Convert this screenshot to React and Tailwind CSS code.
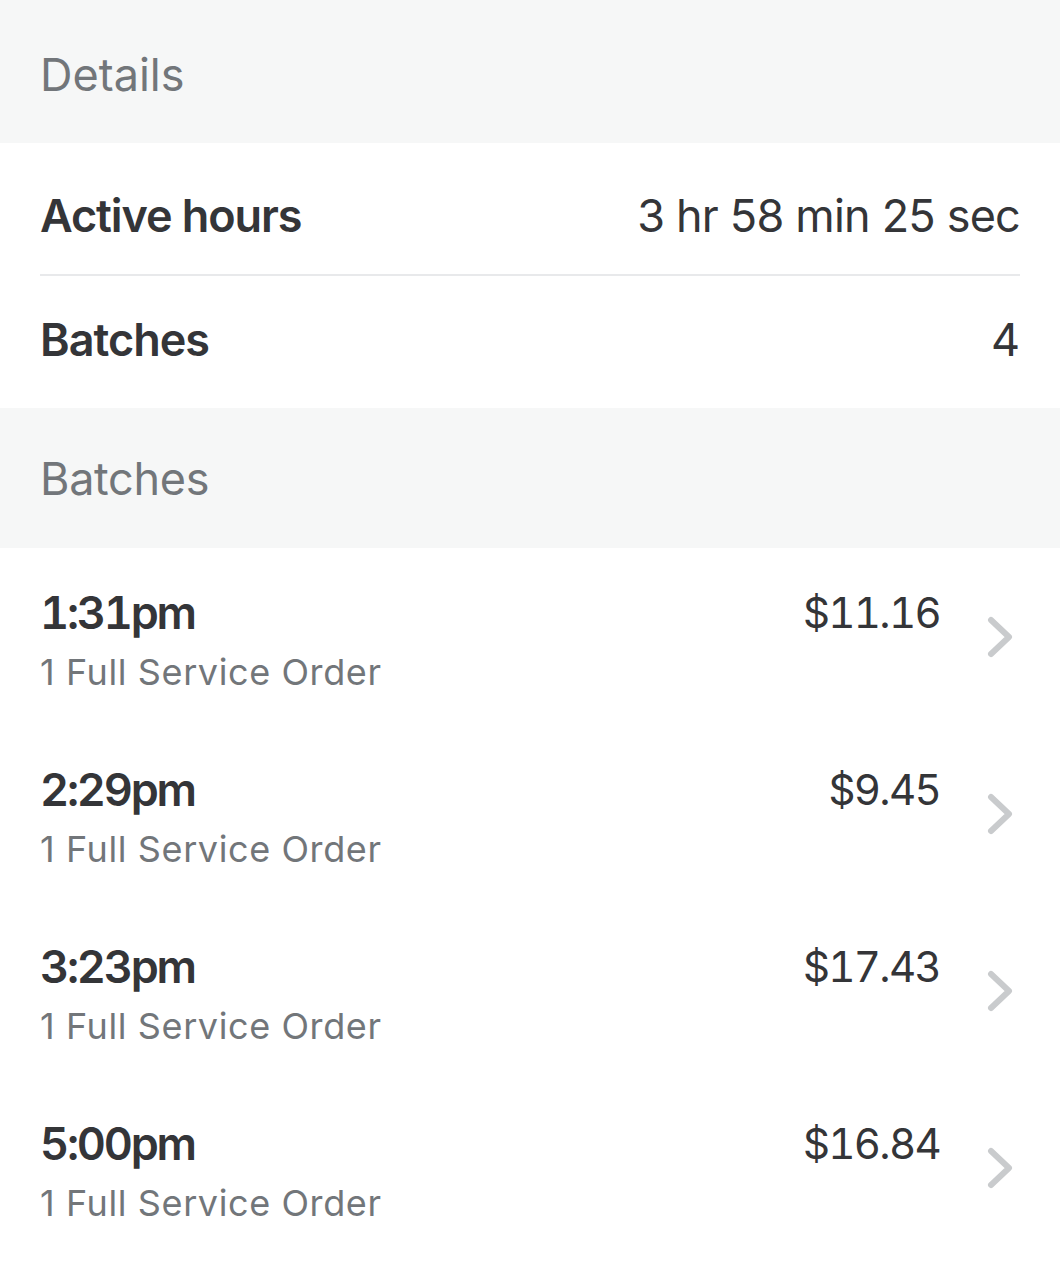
import React from "react";

const batches = [
  { time: "1:31pm", price: "$11.16" },
  { time: "2:29pm", price: "$9.45" },
  { time: "3:23pm", price: "$17.43" },
  { time: "5:00pm", price: "$16.84" },
];

function Chevron() {
  return (
    <svg width="26" height="42" viewBox="0 0 26 42" fill="none" className="shrink-0">
      <polyline
        points="4,4 22,21 4,38"
        stroke="#c9cbcd"
        strokeWidth="6"
        strokeLinecap="round"
        strokeLinejoin="round"
      />
    </svg>
  );
}

export default function App() {
  return (
    <div
      className="w-[1060px] h-[1280px] bg-white text-[#343538]"
      style={{ fontFamily: "Inter, 'Noto Sans', sans-serif" }}
    >
      <div className="h-[143px] bg-[#f6f7f7] px-10 pt-[48px]">
        <div className="text-[45px] leading-[54px] text-[#72767a]">Details</div>
      </div>

      <div className="px-10">
        <div className="flex items-start justify-between pt-[46px] pb-[31px] border-b-2 border-[#e8e9eb]">
          <div className="text-[45px] leading-[54px] font-semibold tracking-[-1.1px]">Active hours</div>
          <div className="text-[45px] leading-[54px] tracking-[-0.8px]">3 hr 58 min 25 sec</div>
        </div>
        <div className="flex items-start justify-between pt-[37px] pb-[41px]">
          <div className="text-[45px] leading-[54px] font-semibold tracking-[-1px]">Batches</div>
          <div className="text-[45px] leading-[54px]">4</div>
        </div>
      </div>

      <div className="h-[140px] bg-[#f6f7f7] px-10 pt-[44px]">
        <div className="text-[45px] leading-[54px] text-[#72767a] tracking-[-0.3px]">Batches</div>
      </div>

      <div>
        {batches.map((b) => (
          <div key={b.time} className="h-[177px] flex items-start pl-10 pr-[47px] pt-[38px]">
            <div className="flex-1">
              <div className="text-[45px] leading-[54px] font-semibold tracking-[-2.2px] tabular-nums">{b.time}</div>
              <div className="mt-[10px] text-[36px] leading-[44px] text-[#72767a] tracking-[0.6px]">
                1 Full Service Order
              </div>
            </div>
            <div className="text-[42px] leading-[54px] mr-[47px] tabular-nums tracking-[-1.7px]">{b.price}</div>
            <div className="mt-[30px]">
              <Chevron />
            </div>
          </div>
        ))}
      </div>
    </div>
  );
}
